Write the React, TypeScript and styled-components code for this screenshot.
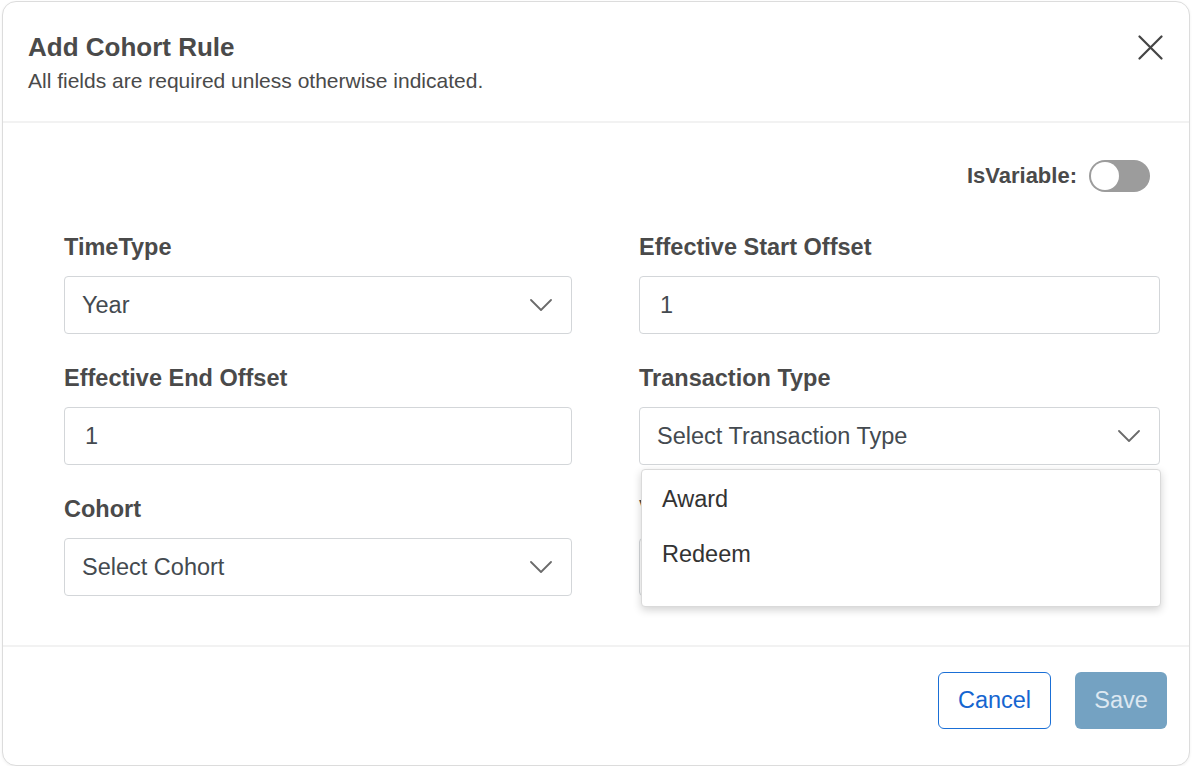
import styled, { createGlobalStyle } from "styled-components";

const GlobalStyle = createGlobalStyle`
    html, body {
        margin: 0;
        padding: 0;
        background: #ffffff;
        font-family: "Liberation Sans", Arial, sans-serif;
    }
    * {
        box-sizing: border-box;
    }
`;

function Chevron() {
    return (
        <svg width="22" height="12" viewBox="0 0 22 12" fill="none">
            <path d="M1 1L11 11L21 1" stroke="#6b6b6b" strokeWidth="1.8" strokeLinecap="round" strokeLinejoin="round" />
        </svg>
    );
}

function CloseIcon() {
    return (
        <svg width="25" height="25" viewBox="0 0 25 25" fill="none">
            <path d="M1.5 1.5L23.5 23.5M23.5 1.5L1.5 23.5" stroke="#444" strokeWidth="2.2" strokeLinecap="round" />
        </svg>
    );
}

export default function App() {
    return (
        <>
            <GlobalStyle />
            <Modal>
                <Header>
                    <HeaderText>
                        <Title>Add Cohort Rule</Title>
                        <Subtitle>All fields are required unless otherwise indicated.</Subtitle>
                    </HeaderText>
                    <CloseButton aria-label="Close"><CloseIcon /></CloseButton>
                </Header>

                <Body>
                    <ToggleRow>
                        <ToggleLabel>IsVariable:</ToggleLabel>
                        <Toggle $on={false}><Knob /></Toggle>
                    </ToggleRow>

                    <Grid>
                        <Field>
                            <Label>TimeType</Label>
                            <SelectBox>
                                <Value>Year</Value>
                                <Chevron />
                            </SelectBox>
                        </Field>

                        <Field>
                            <Label>Effective Start Offset</Label>
                            <InputBox>
                                <Value>1</Value>
                            </InputBox>
                        </Field>

                        <Field>
                            <Label>Effective End Offset</Label>
                            <InputBox>
                                <Value>1</Value>
                            </InputBox>
                        </Field>

                        <Field>
                            <Label>Transaction Type</Label>
                            <SelectBox>
                                <Value>Select Transaction Type</Value>
                                <Chevron />
                            </SelectBox>
                            <Menu>
                                <MenuItem>Award</MenuItem>
                                <MenuItem>Redeem</MenuItem>
                            </Menu>
                        </Field>

                        <Field>
                            <Label>Cohort</Label>
                            <SelectBox>
                                <Value>Select Cohort</Value>
                                <Chevron />
                            </SelectBox>
                        </Field>

                        <Field>
                            <Label>Variable Type</Label>
                            <SelectBox>
                                <Value>Select Variable Type</Value>
                                <Chevron />
                            </SelectBox>
                        </Field>
                    </Grid>
                </Body>

                <Footer>
                    <CancelButton>Cancel</CancelButton>
                    <SaveButton disabled>Save</SaveButton>
                </Footer>
            </Modal>
        </>
    );
}

const Modal = styled.div`
    width: 1188px;
    height: 765px;
    margin: 1px 0 0 2px;

    display: flex;
    flex-direction: column;

    background: #ffffff;
    border: 1px solid #dcdcdc;
    border-radius: 14px;
    box-shadow: 0 1px 3px rgba(0, 0, 0, 0.06);
    overflow: hidden;
`;

const Header = styled.div`
    height: 121px;

    display: flex;
    justify-content: space-between;
    align-items: flex-start;

    padding: 31px 26px 0 25px;
    border-bottom: 2px solid #f2f2f2;
`;

const HeaderText = styled.div`
    display: flex;
    flex-direction: column;
`;

const Title = styled.div`
    color: #4a4a4a;
    font-size: 26px;
    font-weight: 700;
    line-height: 28px;
`;

const Subtitle = styled.div`
    color: #4a4a4a;
    font-size: 21px;
    font-weight: 400;
    line-height: 24px;

    margin-top: 8px;
`;

const CloseButton = styled.button`
    display: flex;
    align-items: center;
    justify-content: center;

    background: none;
    border: none;
    padding: 0;
    margin-top: 2px;
    cursor: pointer;
`;

const Body = styled.div`
    flex: 1;

    display: flex;
    flex-direction: column;

    padding: 37px 30px 0 61px;
    border-bottom: 2px solid #f2f2f2;
`;

const ToggleRow = styled.div`
    display: flex;
    justify-content: flex-end;
    align-items: center;
    gap: 12px;

    margin-right: 9px;
`;

const ToggleLabel = styled.span`
    color: #4a4a4a;
    font-size: 22px;
    font-weight: 700;
`;

const Toggle = styled.div<{ $on: boolean }>`
    width: 61px;
    height: 32px;

    display: flex;
    align-items: center;
    justify-content: ${(p) => (p.$on ? "flex-end" : "flex-start")};

    padding: 2px;
    border-radius: 16px;
    background: ${(p) => (p.$on ? "#1a6fd6" : "#9c9c9c")};
`;

const Knob = styled.div`
    width: 28px;
    height: 28px;
    border-radius: 50%;
    background: #ffffff;
`;

const Grid = styled.div`
    display: grid;
    grid-template-columns: 508px 521px;
    column-gap: 67px;
    row-gap: 31px;

    margin-top: 42px;
`;

const Field = styled.div`
    position: relative;

    display: flex;
    flex-direction: column;
    gap: 16px;
`;

const Label = styled.div`
    color: #4a4a4a;
    font-size: 23.5px;
    font-weight: 700;
    line-height: 26px;
`;

const InputBox = styled.div`
    height: 58px;

    display: flex;
    align-items: center;

    padding: 0 20px 0 20px;
    border: 1px solid #d3d6d9;
    border-radius: 4px;
    background: #ffffff;
`;

const SelectBox = styled(InputBox)`
    justify-content: space-between;
    padding: 0 19px 0 17px;
`;

const Value = styled.span`
    color: #444a50;
    font-size: 23.5px;
    font-weight: 400;
`;

const Menu = styled.div`
    position: absolute;
    top: 104px;
    left: 2px;
    width: 520px;
    height: 138px;

    display: flex;
    flex-direction: column;

    padding-top: 2px;
    background: #ffffff;
    border: 1px solid #dadada;
    border-radius: 4px;
    box-shadow: 0 3px 8px rgba(0, 0, 0, 0.18);
    z-index: 10;
`;

const MenuItem = styled.div`
    height: 55px;

    display: flex;
    align-items: center;

    padding-left: 20px;
    color: #333333;
    font-size: 23.5px;
    font-weight: 400;
`;

const Footer = styled.div`
    height: 118px;

    display: flex;
    justify-content: flex-end;
    align-items: center;
    gap: 24px;

    padding: 0 22px 12px 0;
`;

const CancelButton = styled.button`
    width: 113px;
    height: 57px;

    font-family: "Liberation Sans", Arial, sans-serif;
    font-size: 23.5px;
    color: #1565d0;

    background: #ffffff;
    border: 1.5px solid #1a6fd6;
    border-radius: 6px;
    cursor: pointer;
`;

const SaveButton = styled.button`
    width: 92px;
    height: 57px;

    font-family: "Liberation Sans", Arial, sans-serif;
    font-size: 23.5px;
    color: #dde8f1;

    background: #74a2c2;
    border: none;
    border-radius: 6px;
`;
